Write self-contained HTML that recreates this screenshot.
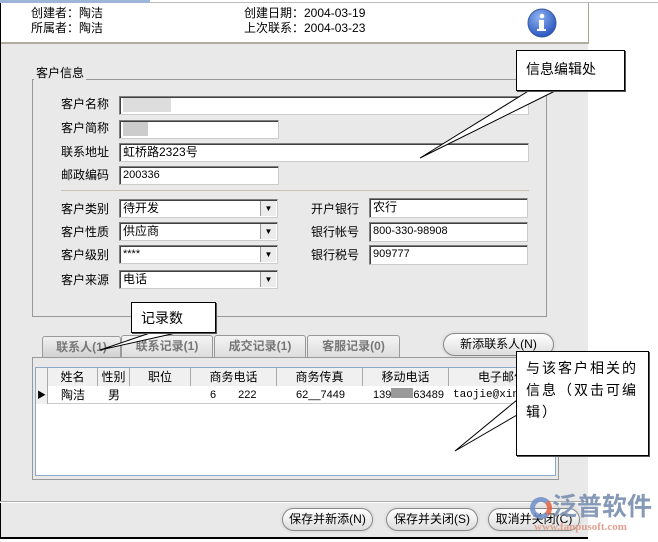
<!DOCTYPE html>
<html><head><meta charset="utf-8"><style>
*{margin:0;padding:0;box-sizing:border-box}
body{width:658px;height:542px;background:#fff;position:relative;overflow:hidden;font-family:"Liberation Sans","Noto Sans CJK SC",sans-serif;font-size:12px;color:#000}
.a{position:absolute;white-space:nowrap;line-height:14px}
.in{position:absolute;background:#fff;border:1px solid #7f7f7f;border-right-color:#ccc;border-bottom-color:#ccc;box-shadow:inset 1px 1px 0 #404040;padding-left:3px;line-height:16px;font-size:11px}
.dd{position:absolute;right:1px;top:1px;bottom:1px;width:16px;background:#ececec;border-left:1px solid #999;font-size:8px;text-align:center;line-height:16px}
.tab{position:absolute;top:335px;height:22px;border:1px solid #999;border-bottom:none;background:linear-gradient(#f4f4f4,#ddd);color:#777;font-weight:bold;text-align:center;line-height:20px;border-radius:3px 3px 0 0}
.btn{position:absolute;height:23px;border:1px solid #888;border-radius:12px;background:linear-gradient(#fff,#ddd);text-align:center;line-height:21px;box-shadow:0 0 0 2px #e0e0e0}
.th{position:absolute;top:368px;height:18px;border-right:1px solid #aaa;text-align:center;line-height:18px;background:#f0f0f0}
.box{position:absolute;background:#fff;border:1px solid #000;box-shadow:1px 1px 0 #555;font-size:14px}
</style></head><body>
<div style="position:absolute;left:0;top:2px;width:658px;height:1px;background:#bbb"></div>
<div style="position:absolute;left:0;top:0;width:150px;height:3px;background:#9db5d8"></div>
<div style="position:absolute;left:0;top:3px;width:589px;height:40px;background:#fff;border-right:1px solid #aaa59a"></div>
<div style="position:absolute;left:0;top:42px;width:589px;height:2px;background:#b0aca0"></div>
<div style="position:absolute;left:0;top:44px;width:588px;height:494px;background:#e9e9e9"></div>
<div style="position:absolute;left:0;top:3px;width:1px;height:535px;background:#000"></div>
<div style="position:absolute;left:0;top:537px;width:588px;height:2px;background:#000"></div>
<div class="a" style="left:31px;top:6px">创建者：陶洁</div>
<div class="a" style="left:31px;top:21px">所属者：陶洁</div>
<div class="a" style="left:244px;top:6px">创建日期：2004-03-19</div>
<div class="a" style="left:244px;top:21px">上次联系：2004-03-23</div>
<svg style="position:absolute;left:526px;top:7px" width="32" height="32"><defs><radialGradient id="g" cx="40%" cy="30%" r="70%"><stop offset="0" stop-color="#8fb4f0"/><stop offset="1" stop-color="#2a56c0"/></radialGradient></defs><circle cx="16" cy="16" r="14" fill="url(#g)" stroke="#3a5aa0"/><circle cx="16" cy="9" r="2.3" fill="#fff"/><rect x="13" y="13" width="5" height="10" fill="#fff"/><rect x="11" y="22" width="9" height="2" fill="#fff"/></svg>

<div style="position:absolute;left:32px;top:79px;width:515px;height:238px;border:1px solid #999"></div>
<div class="a" style="left:34px;top:66px;background:#e9e9e9;padding:0 2px">客户信息</div>
<div class="a" style="left:61px;top:97px">客户名称</div>
<div class="a" style="left:61px;top:121px">客户简称</div>
<div class="a" style="left:61px;top:145px">联系地址</div>
<div class="a" style="left:61px;top:168px">邮政编码</div>
<div class="in" style="left:119px;top:96px;width:410px;height:19px"><span style="display:inline-block;width:48px;height:14px;background:#ddd;vertical-align:middle"></span></div>
<div class="in" style="left:119px;top:120px;width:160px;height:19px"><span style="display:inline-block;width:25px;height:14px;background:#ccc;vertical-align:middle"></span></div>
<div class="in" style="left:119px;top:143px;width:410px;height:19px;font-size:12px">虹桥路2323号</div>
<div class="in" style="left:119px;top:166px;width:160px;height:19px">200336</div>
<div style="position:absolute;left:61px;top:190px;width:468px;height:1px;background:#c8c4b0"></div>
<div class="a" style="left:61px;top:202px">客户类别</div>
<div class="a" style="left:61px;top:225px">客户性质</div>
<div class="a" style="left:61px;top:248px">客户级别</div>
<div class="a" style="left:61px;top:273px">客户来源</div>
<div class="in" style="left:119px;top:199px;width:159px;height:19px;font-size:12px">待开发<div class="dd">▼</div></div>
<div class="in" style="left:119px;top:222px;width:159px;height:19px;font-size:12px">供应商<div class="dd">▼</div></div>
<div class="in" style="left:119px;top:245px;width:159px;height:19px">****<div class="dd">▼</div></div>
<div class="in" style="left:119px;top:270px;width:159px;height:19px;font-size:12px">电话<div class="dd">▼</div></div>
<div class="a" style="left:311px;top:202px">开户银行</div>
<div class="a" style="left:311px;top:225px">银行帐号</div>
<div class="a" style="left:311px;top:248px">银行税号</div>
<div class="in" style="left:369px;top:198px;width:159px;height:20px;font-size:12px">农行</div>
<div class="in" style="left:369px;top:222px;width:159px;height:20px">800-330-98908</div>
<div class="in" style="left:369px;top:245px;width:159px;height:20px">909777</div>

<div class="tab" style="left:42px;width:79px;top:336px;background:linear-gradient(#f0f0f0,#d0d0d0)">联系人(1)</div>
<div class="tab" style="left:121px;width:92px">联系记录(1)</div>
<div class="tab" style="left:214px;width:92px">成交记录(1)</div>
<div class="tab" style="left:307px;width:93px">客服记录(0)</div>
<div class="btn" style="left:443px;top:333px;width:111px">新添联系人(N)</div>
<div style="position:absolute;left:32px;top:357px;width:527px;height:123px;border:1px solid #999;background:#e9e9e9"></div>
<div style="position:absolute;left:35px;top:367px;width:521px;height:109px;border:1px solid #8aa8c8;background:#fff"></div>
<div style="position:absolute;left:36px;top:368px;width:519px;height:18px;background:#f0f0f0;border-bottom:1px solid #aaa"></div>
<div class="th" style="left:36px;width:12px"></div>
<div class="th" style="left:48px;width:50px">姓名</div>
<div class="th" style="left:98px;width:32px">性别</div>
<div class="th" style="left:130px;width:61px">职位</div>
<div class="th" style="left:191px;width:86px">商务电话</div>
<div class="th" style="left:277px;width:86px">商务传真</div>
<div class="th" style="left:363px;width:86px">移动电话</div>
<div class="th" style="left:449px;width:106px;border:none">电子邮件</div>
<div style="position:absolute;left:36px;top:386px;width:519px;height:18px;border-bottom:1px solid #ccc"></div>
<div style="position:absolute;left:36px;top:386px;width:12px;height:18px;background:#f0f0f0;border-right:1px solid #aaa;font-size:9px;line-height:18px;text-align:center">▶</div>
<div class="a" style="left:61px;top:388px">陶洁</div>
<div class="a" style="left:108px;top:388px">男</div>
<div class="a" style="left:210px;top:388px;font-size:11px">6<span style="display:inline-block;width:22px"></span>222</div>
<div class="a" style="left:296px;top:388px;font-size:11px">62__7449</div>
<div class="a" style="left:373px;top:388px;font-size:11px">139<span style="display:inline-block;width:22px;height:10px;background:#999"></span>63489</div>
<div class="a" style="left:453px;top:388px;font-size:11px;font-family:'Liberation Mono',monospace">taojie@xin</div>

<div style="position:absolute;left:0;top:501px;width:588px;height:1px;background:#aaa"></div>
<div style="position:absolute;left:0;top:502px;width:588px;height:1px;background:#fff"></div>
<div class="btn" style="left:282px;top:508px;width:91px">保存并新添(N)</div>
<div class="btn" style="left:386px;top:508px;width:92px">保存并关闭(S)</div>
<div class="btn" style="left:488px;top:508px;width:92px">取消并关闭(C)</div>
<div style="position:absolute;left:530px;top:497px;width:22px;height:22px;border-radius:50%;border:5px solid #6d8fc8;border-right-color:#e06040;opacity:.85"></div>
<div class="a" style="left:552px;top:492px;font-size:25px;line-height:30px;color:#7a8fb0;font-weight:bold;opacity:.9">泛普软件</div>
<div class="a" style="left:534px;top:520px;font-size:11px;color:#e0a090;font-family:'Liberation Serif',serif;font-weight:bold">www.fanpusoft.com</div>

<svg style="position:absolute;left:0;top:0" width="658" height="542">
<polygon points="530,90 420,158 557,90" fill="#fff" stroke="#000"/>
<polygon points="150,333 100,350 176,333" fill="#fff" stroke="#000"/>
<polygon points="517,400 455,451 517,415" fill="#fff" stroke="#000"/>
</svg>
<div class="box" style="left:516px;top:50px;width:109px;height:41px;padding:8px 0 0 9px">信息编辑处</div>
<div class="box" style="left:131px;top:302px;width:85px;height:31px;padding:5px 0 0 9px">记录数</div>
<div class="box" style="left:516px;top:351px;width:133px;height:105px;padding:5px 0 0 9px;line-height:22px;letter-spacing:2px">与该客户相关的<br>信息（双击可编<br>辑）</div>
</body></html>
